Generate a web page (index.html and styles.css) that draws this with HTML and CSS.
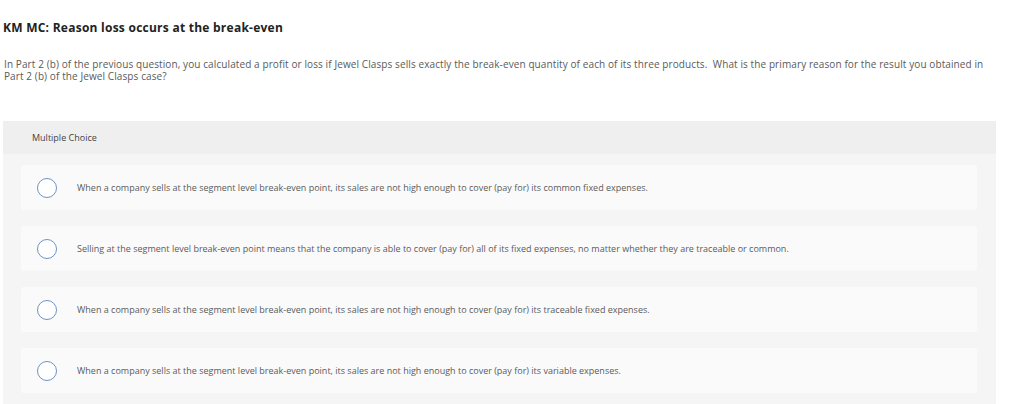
FILE: index.html
```html
<!DOCTYPE html>
<html>
<head>
<meta charset="utf-8">
<link rel="stylesheet" href="styles.css">
</head>
<body>
<div class="page">
  <h1 class="title">KM MC: Reason loss occurs at the break-even</h1>
  <p class="prompt">In Part 2 (b) of the previous question, you calculated a profit or loss if Jewel Clasps sells exactly the break-even quantity of each of its three products.&nbsp; What is the primary reason for the result you obtained in Part 2 (b) of the Jewel Clasps case?</p>
  <section class="panel">
    <div class="panel-head">Multiple Choice</div>
    <div class="options">
      <div class="option"><span class="radio"></span><span class="label">When a company sells at the segment level break-even point, its sales are not high enough to cover (pay for) its common fixed expenses.</span></div>
      <div class="option"><span class="radio"></span><span class="label">Selling at the segment level break-even point means that the company is able to cover (pay for) all of its fixed expenses, no matter whether they are traceable or common.</span></div>
      <div class="option"><span class="radio"></span><span class="label">When a company sells at the segment level break-even point, its sales are not high enough to cover (pay for) its traceable fixed expenses.</span></div>
      <div class="option"><span class="radio"></span><span class="label">When a company sells at the segment level break-even point, its sales are not high enough to cover (pay for) its variable expenses.</span></div>
    </div>
  </section>
</div>
</body>
</html>
```

FILE: styles.css
```css
html, body {
  margin: 0;
  padding: 0;
  background: #ffffff;
}
body {
  font-family: "Open Sans", "Liberation Sans", sans-serif;
  color: #555;
}
.page {
  padding: 0 28px 0 3px;
}
.title {
  margin: 21px 0 0 0;
  font-size: 12px;
  line-height: 14px;
  font-weight: 700;
  letter-spacing: 0.25px;
  color: #222;
}
.prompt {
  margin: 23px 0 0 1px;
  max-width: 986px;
  font-size: 10px;
  line-height: 12px;
  letter-spacing: 0.1px;
  color: #5a5a5a;
}
.panel {
  margin-top: 39px;
  background: #f5f5f5;
  padding-bottom: 20px;
}
.panel-head {
  background: #efefef;
  height: 33px;
  padding-left: 29px;
  font-size: 9px;
  line-height: 33px;
  color: #444;
}
.options {
  display: flex;
  flex-direction: column;
  gap: 16px;
  padding: 11px 19px 0 18px;
}
.option {
  display: flex;
  align-items: center;
  height: 45px;
  background: #fafafa;
  border-radius: 2px;
  padding-left: 16px;
}
.radio {
  box-sizing: border-box;
  width: 20px;
  height: 20px;
  border-radius: 50%;
  border: 1.5px solid #6d93c6;
  background: #fff;
  flex: none;
}
.label {
  margin-left: 20px;
  font-size: 9px;
  color: #5a5a5a;
}
```
